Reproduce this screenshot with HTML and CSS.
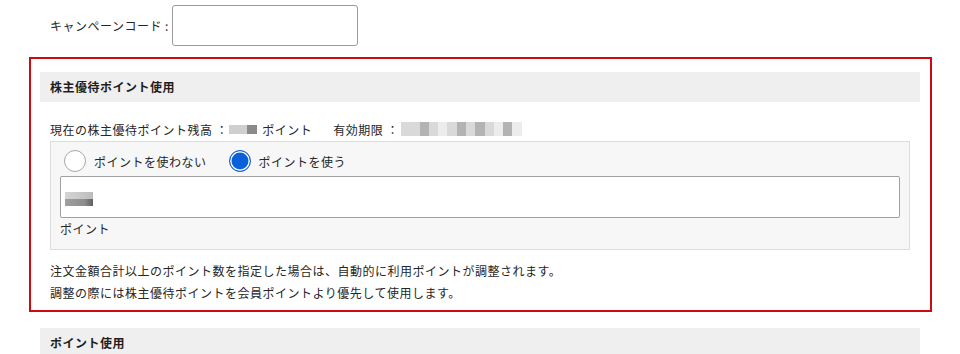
FILE: index.html
```html
<!DOCTYPE html>
<html lang="ja">
<head>
<meta charset="utf-8">
<link rel="stylesheet" href="styles.css">
</head>
<body>
<div class="campaign">
  <span class="campaign-label">キャンペーンコード :</span>
  <input class="campaign-input" type="text">
</div>

<section class="box">
  <h2 class="sec-head">株主優待ポイント使用</h2>
  <div class="content">
    <div class="balance">
      <span>現在の株主優待ポイント残高 ：</span>
      <span class="blur blur-bal"><i class="m1"></i><i class="m1"></i><i class="m2"></i></span>
      <span>ポイント</span>
      <span class="exp">有効期限 ：</span>
      <span class="blur blur-exp"><i class="m1"></i><i class="m1"></i><i class="m3"></i><i class="m1"></i><i class="m0"></i><i class="m1"></i><i class="m3"></i><i class="m1"></i><i class="m3"></i><i class="m1"></i><i class="m0"></i><i class="m3"></i><i class="m0"></i></span>
    </div>
    <div class="panel">
      <div class="radios">
        <label class="radio"><input type="radio" name="use"><span>ポイントを使わない</span></label>
        <label class="radio"><input type="radio" name="use" checked><span>ポイントを使う</span></label>
      </div>
      <div class="point-input"><span class="blur-val"><span class="row-a"></span><span class="row-b"></span></span></div>
      <div class="unit">ポイント</div>
    </div>
    <p class="note">注文金額合計以上のポイント数を指定した場合は、自動的に利用ポイントが調整されます。<br>調整の際には株主優待ポイントを会員ポイントより優先して使用します。</p>
  </div>
</section>

<h2 class="sec-head sec-bottom">ポイント使用</h2>
</body>
</html>
```

FILE: styles.css
```css
* { box-sizing: border-box; }
body {
  margin: 0;
  background: #fff;
  color: #262626;
  font-family: "Noto Sans CJK JP", "Noto Sans", sans-serif;
  font-size: 12px;
  letter-spacing: 0.5px;
}
.campaign {
  display: flex;
  align-items: center;
  padding: 5px 0 0 50px;
}
.campaign-label { margin-right: 3px; }
.campaign-input {
  width: 186px;
  height: 41px;
  border: 1px solid #9a9a9a;
  border-radius: 3px;
  background: #fff;
  margin: 0;
}
.box {
  margin: 11px 28px 0 29px;
  border: 2px solid #cc0a12;
  padding: 13px 10px 6px 9px;
}
.sec-head {
  margin: 0;
  height: 30px;
  line-height: 30px;
  background: #efefef;
  font-size: 12px;
  font-weight: bold;
  color: #1e1e1e;
  padding-left: 10px;
}
.content { padding: 0 10px; }
.balance {
  display: flex;
  align-items: center;
  height: 20px;
  margin-top: 17px;
}
.blur { display: inline-flex; }
.blur i { display: block; }
.blur-bal { margin: 0 5px 0 1px; height: 9px; }
.blur-bal i { width: 9px; height: 9px; }
.blur-bal .m1 { background: #cfcfcf; }
.blur-bal .m2 { background: #8a8a8a; width: 10px; }
.exp { margin-left: 21px; }
.blur-exp { margin-left: 2px; height: 14px; }
.blur-exp i { width: 9.3px; height: 14px; }
.blur-exp .m0 { background: #ececec; }
.blur-exp .m1 { background: #d9d9d9; }
.blur-exp .m3 { background: #b3b3b3; }
.panel {
  margin-top: 2px;
  border: 1px solid #dcdcdc;
  background: #f7f7f7;
  padding: 8px 9px 9px 9px;
}
.radios {
  display: flex;
  align-items: center;
  height: 22px;
  padding-left: 4px;
  gap: 22px;
}
.radio {
  display: flex;
  align-items: center;
  gap: 8px;
}
.radio input {
  appearance: none;
  -webkit-appearance: none;
  margin: 0;
  width: 22px;
  height: 22px;
  border-radius: 50%;
  border: 1px solid #a8a8a8;
  background: #fff;
}
.radio input:checked {
  border: 1.5px solid #1b63d0;
  background: #0b5fd8;
  box-shadow: inset 0 0 0 1.5px #fff;
}
.point-input {
  margin-top: 4px;
  height: 42px;
  border: 1px solid #a0a0a0;
  border-radius: 2px;
  background: #fff;
  display: flex;
  align-items: center;
  padding-left: 4px;
}
.blur-val { display: flex; flex-direction: column; margin-top: 4px; }
.row-a { display: block; width: 28px; height: 7px; background: linear-gradient(90deg, #d5d5d5, #c4c4c4 70%, #bdbdbd); }
.row-b { display: block; width: 28px; height: 7px; background: linear-gradient(90deg, #a0a0a0, #8d8d8d 70%, #606060); }
.unit {
  height: 22px;
  line-height: 22px;
}
.note {
  margin: 10px 0 0;
  line-height: 22px;
}
.sec-bottom {
  margin: 16px 40px 0 40px;
}
```
